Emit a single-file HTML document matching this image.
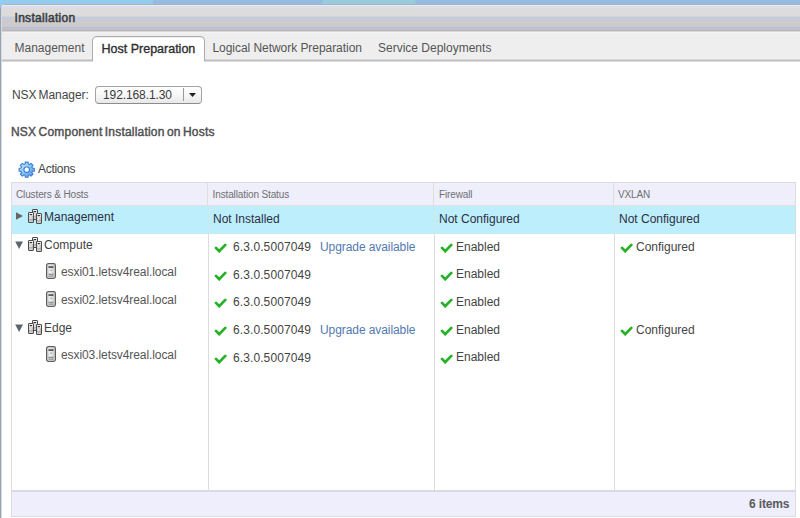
<!DOCTYPE html>
<html><head><meta charset="utf-8">
<style>
*{margin:0;padding:0;box-sizing:border-box}
html,body{width:800px;height:518px;overflow:hidden;background:#fff}
body{position:relative;font-family:"Liberation Sans",sans-serif;font-size:12px;color:#333}
.a{position:absolute}
.t{position:absolute;line-height:14px;white-space:nowrap}
#topband{left:0;top:0;width:800px;height:12px;background:#96bbe0}
#seg1{left:0;top:0;width:154px;height:12px;background:#94ccf0;clip-path:polygon(0 0,153.5px 0,150px 12px,0 12px)}
#seg2{left:318px;top:0;width:98px;height:12px;background:#98ccdc;clip-path:polygon(5px 0,97.5px 0,97.5px 12px,0 12px)}
#panel{left:0;top:4px;width:800px;height:514px;background:#fff;border-top-left-radius:5px;overflow:hidden;border-left:1px solid #97a3ae}
#hdr{left:-1px;top:0;width:801px;height:27px;background:linear-gradient(to bottom,#aab2b8 0px,#aab2b8 1px,#e2eef4 1px,#e2eef4 2px,#dcdcec 2px,#dcdcec 4px,#dcdcdc 4px,#dcdcdc 12px,#c8d8dc 12px,#c8d8dc 13px,#cacadc 13px,#cacadc 16px,#cccccc 16px,#cccccc 22px,#c0ccd0 22px,#c0ccd0 23px,#c0c0d2 23px,#c0c0d2 26px,#b8b8b8 26px,#b8b8b8 27px)}
#leftb{left:0;top:0;width:1px;height:514px;background:#d6dade}
#tabbar{left:-1px;top:27px;width:801px;height:31px;background:linear-gradient(to bottom,#d8d8d8 0px,#d8d8d8 1px,#f4f4f4 1px,#f4f4f4 2px,#eeeeee 2px,#eeeeee 27px,#f2f2f2 27px,#f2f2f2 28px,#d4d4d4 28px,#d4d4d4 29px,#c2c2c2 29px,#c2c2c2 30px,#dcdcdc 30px,#dcdcdc 31px)}
#acttab{left:91px;top:32px;width:113px;height:25px;background:#fff;border:1px solid #acacac;border-bottom:none;border-radius:5px 5px 0 0;box-shadow:inset 0 1px 0 #f0f0f0}
#acttab2{left:92px;top:57px;width:111px;height:2px;background:#fff}
.tab{color:#555}
#hp{color:#2e2e2e;font-size:12.5px;-webkit-text-stroke:0.35px #2e2e2e}
#dd{left:95px;top:85.6px;width:107px;height:18.8px;border:1px solid #a4a4a4;border-bottom-color:#8c8c8c;border-radius:4px;background:linear-gradient(to bottom,#fff 0,#fafafa 40%,#e8e8e8 100%)}
#ddsep{left:183px;top:88px;width:1px;height:13px;background:#9a9a9a}
#grid{left:11px;top:182px;width:785px;height:335px;border:1px solid #dcdcdc;background:#fff}
#ghdr{left:12px;top:183px;width:783px;height:23px;background:#efeefb;border-bottom:1px solid #e6dfe0}
.h{position:absolute;font-size:10px;line-height:14px;color:#707070;white-space:nowrap;letter-spacing:-0.13px}
.col{position:absolute;top:206px;width:1px;height:284px;background:#dcdcdc}
.hcol{position:absolute;top:183px;width:1px;height:22px;background:#dedede}
#sel{left:12px;top:206px;width:783px;height:27.5px;background:#bdeefb}
#foot{left:12px;top:490px;width:783px;height:26px;background:#eeeefc;border-top:2px solid #dadae0}
.r{position:absolute;line-height:27px;height:27px;white-space:nowrap;color:#333}
.up{color:#5279b0}
</style></head><body>
<svg width="0" height="0" style="position:absolute">
<defs>
 <linearGradient id="tw" x1="0" y1="0" x2="1" y2="0"><stop offset="0" stop-color="#c4c4c4"/><stop offset="0.4" stop-color="#e4e4e4"/><stop offset="1" stop-color="#b4b4b4"/></linearGradient>
 <g id="tower">
  <rect x="0.5" y="0.5" width="5" height="10" rx="0.4" fill="url(#tw)" stroke="#4c4c4c"/>
  <rect x="1" y="1" width="4" height="3" fill="#f4f4f4"/>
  <rect x="1.6" y="2" width="2.6" height="1.2" fill="#333"/>
  <rect x="1" y="7.4" width="4" height="1" fill="#9a9a9a"/>
  <rect x="1" y="8.4" width="4" height="1.2" fill="#c8c8c8"/>
 </g>
 <g id="cl">
  <use href="#tower" x="4" y="0"/>
  <use href="#tower" x="0" y="3"/>
  <use href="#tower" x="8" y="4"/>
 </g>
 <linearGradient id="sg" x1="0" y1="0" x2="1" y2="0"><stop offset="0" stop-color="#c8c8c8"/><stop offset="0.4" stop-color="#f2f2f2"/><stop offset="1" stop-color="#c0c0c0"/></linearGradient>
 <g id="sv">
  <rect x="0.6" y="0.6" width="8.8" height="14.8" rx="1.8" fill="url(#sg)" stroke="#5c5c5c" stroke-width="1.2"/>
  <rect x="2" y="2" width="6" height="12" fill="none" stroke="#d8d8d8" stroke-width="0.6"/>
  <rect x="2.5" y="3.2" width="5" height="1.8" fill="#5a5a5a"/>
  <rect x="4.3" y="6.5" width="1.4" height="1.4" fill="#999"/>
  <rect x="2.5" y="10.8" width="5" height="1" fill="#7a7a7a"/>
  <rect x="2.5" y="12.6" width="5" height="1" fill="#7a7a7a"/>
 </g>
 <path id="ck" d="M2 4.9L5.2 8.2L11.3 1.9" fill="none" stroke="#27b127" stroke-width="2.7" stroke-linecap="round"/>
</defs></svg>

<div class="a" id="topband"></div>
<div class="a" id="seg1"></div>
<div class="a" id="seg2"></div>
<div class="a" id="panel">
  <div class="a" id="hdr"></div>
  <div class="a" id="tabbar"></div>
  <div class="a" id="acttab"></div><div class="a" id="acttab2"></div>
  <div class="a" id="leftb"></div>
</div>
<div class="t" style="left:14.5px;top:11px;color:#3c3c3c;letter-spacing:0.3px;-webkit-text-stroke:0.5px #3c3c3c">Installation</div>
<div class="t tab" style="left:14.5px;top:41.4px">Management</div>
<div class="t" id="hp" style="left:101.5px;top:41.6px">Host Preparation</div>
<div class="t tab" style="left:212.5px;top:41.4px;letter-spacing:-0.05px">Logical Network Preparation</div>
<div class="t tab" style="left:378px;top:41.4px">Service Deployments</div>

<div class="t" style="left:12px;top:88px;color:#444;letter-spacing:-0.05px;word-spacing:-1.3px">NSX Manager:</div>
<div class="a" id="dd"></div>
<div class="a" id="ddsep"></div>
<div class="t" style="left:103px;top:88.4px;color:#3a3a3a;letter-spacing:-0.1px">192.168.1.30</div>
<svg class="a" style="left:189px;top:93px" width="8" height="5"><path d="M0 0H7L3.5 4Z" fill="#222"/></svg>

<div class="t" style="left:11px;top:125px;color:#505050;letter-spacing:0.2px;word-spacing:-1.2px;-webkit-text-stroke:0.45px #505050">NSX Component Installation on Hosts</div>

<svg class="a" style="left:18.4px;top:160.8px" width="17.4" height="17.4" viewBox="0 0 18 18"><defs><linearGradient id="gg" x1="0" y1="0" x2="1" y2="1"><stop offset="0" stop-color="#d0f0fd"/><stop offset="0.45" stop-color="#8ccaf4"/><stop offset="1" stop-color="#4a94e4"/></linearGradient></defs><path d="M7.34 3.13 L7.50 1.14 L10.50 1.14 L10.66 3.13 L11.98 3.68 L13.50 2.38 L15.62 4.50 L14.32 6.02 L14.87 7.34 L16.86 7.50 L16.86 10.50 L14.87 10.66 L14.32 11.98 L15.62 13.50 L13.50 15.62 L11.98 14.32 L10.66 14.87 L10.50 16.86 L7.50 16.86 L7.34 14.87 L6.02 14.32 L4.50 15.62 L2.38 13.50 L3.68 11.98 L3.13 10.66 L1.14 10.50 L1.14 7.50 L3.13 7.34 L3.68 6.02 L2.38 4.50 L4.50 2.38 L6.02 3.68Z" fill="url(#gg)" stroke="#3a7ad4" stroke-width="1.1" stroke-linejoin="round"/><circle cx="9" cy="9" r="2.8" fill="none" stroke="#3a78d0" stroke-width="1.2"/><circle cx="9" cy="9" r="2.2" fill="#fff"/></svg>
<div class="t" style="left:38px;top:161.5px;color:#444;letter-spacing:-0.3px">Actions</div>

<div class="a" id="grid"></div>
<div class="a" id="ghdr"></div>
<div class="a" id="sel"></div>
<div class="hcol" style="left:207px"></div><div class="col" style="left:208px"></div>
<div class="hcol" style="left:433px"></div><div class="col" style="left:434px"></div>
<div class="hcol" style="left:613px"></div><div class="col" style="left:614px"></div>
<div class="a" id="foot"></div><div class="a" style="left:208px;top:206px;width:1px;height:27.5px;background:#d4e4ea"></div><div class="a" style="left:434px;top:206px;width:1px;height:27.5px;background:#d4e4ea"></div><div class="a" style="left:614px;top:206px;width:1px;height:27.5px;background:#d4e4ea"></div>
<div class="h" style="left:16px;top:187.7px">Clusters &amp; Hosts</div>
<div class="h" style="left:212.6px;top:187.7px">Installation Status</div>
<div class="h" style="left:439px;top:187.7px">Firewall</div>
<div class="h" style="left:618px;top:187.7px">VXLAN</div>

<!--ROWS-->
<svg class="a" style="left:15px;top:212.0px" width="9" height="9"><path d="M1 0.3L8 4L1 7.7Z" fill="#666"/></svg>
<svg class="a" style="left:28px;top:209.0px" width="15" height="16"><use href="#cl"/></svg>
<div class="r" style="left:44px;top:203.5px;color:#2e2e44">Management</div>
<div class="r" style="left:213px;top:206.0px;color:#2e2e44">Not Installed</div>
<div class="r" style="left:439px;top:206.0px;color:#2e2e44">Not Configured</div>
<div class="r" style="left:619px;top:206.0px;color:#2e2e44">Not Configured</div>
<svg class="a" style="left:15px;top:240.5px" width="9" height="9"><path d="M0.2 0.5H8L4.1 8Z" fill="#5a6670"/></svg>
<svg class="a" style="left:28px;top:237.0px" width="15" height="16"><use href="#cl"/></svg>
<div class="r" style="left:44px;top:231.5px;color:#444">Compute</div>
<svg class="a" style="left:214px;top:243.0px" width="13" height="10"><use href="#ck"/></svg>
<div class="r" style="left:233px;top:234.0px;color:#444;letter-spacing:0.1px">6.3.0.5007049</div>
<div class="r up" style="left:320px;top:234.0px;letter-spacing:-0.08px">Upgrade available</div>
<svg class="a" style="left:440px;top:243.0px" width="13" height="10"><use href="#ck"/></svg>
<div class="r" style="left:456px;top:233.5px;color:#444">Enabled</div>
<svg class="a" style="left:620px;top:243.0px" width="13" height="10"><use href="#ck"/></svg>
<div class="r" style="left:636px;top:233.5px;color:#444">Configured</div>
<svg class="a" style="left:46px;top:263.0px" width="11" height="17"><use href="#sv"/></svg>
<div class="r" style="left:61px;top:259.0px;color:#555;letter-spacing:-0.08px">esxi01.letsv4real.local</div>
<svg class="a" style="left:214px;top:270.5px" width="13" height="10"><use href="#ck"/></svg>
<div class="r" style="left:233px;top:261.5px;color:#444;letter-spacing:0.1px">6.3.0.5007049</div>
<svg class="a" style="left:440px;top:270.5px" width="13" height="10"><use href="#ck"/></svg>
<div class="r" style="left:456px;top:261.0px;color:#444">Enabled</div>
<svg class="a" style="left:46px;top:290.8px" width="11" height="17"><use href="#sv"/></svg>
<div class="r" style="left:61px;top:286.8px;color:#555;letter-spacing:-0.08px">esxi02.letsv4real.local</div>
<svg class="a" style="left:214px;top:298.3px" width="13" height="10"><use href="#ck"/></svg>
<div class="r" style="left:233px;top:289.3px;color:#444;letter-spacing:0.1px">6.3.0.5007049</div>
<svg class="a" style="left:440px;top:298.3px" width="13" height="10"><use href="#ck"/></svg>
<div class="r" style="left:456px;top:288.8px;color:#444">Enabled</div>
<svg class="a" style="left:15px;top:323.7px" width="9" height="9"><path d="M0.2 0.5H8L4.1 8Z" fill="#5a6670"/></svg>
<svg class="a" style="left:28px;top:320.2px" width="15" height="16"><use href="#cl"/></svg>
<div class="r" style="left:44px;top:314.7px;color:#444">Edge</div>
<svg class="a" style="left:214px;top:326.2px" width="13" height="10"><use href="#ck"/></svg>
<div class="r" style="left:233px;top:317.2px;color:#444;letter-spacing:0.1px">6.3.0.5007049</div>
<div class="r up" style="left:320px;top:317.2px;letter-spacing:-0.08px">Upgrade available</div>
<svg class="a" style="left:440px;top:326.2px" width="13" height="10"><use href="#ck"/></svg>
<div class="r" style="left:456px;top:316.7px;color:#444">Enabled</div>
<svg class="a" style="left:620px;top:326.2px" width="13" height="10"><use href="#ck"/></svg>
<div class="r" style="left:636px;top:316.7px;color:#444">Configured</div>
<svg class="a" style="left:46px;top:346.2px" width="11" height="17"><use href="#sv"/></svg>
<div class="r" style="left:61px;top:342.2px;color:#555;letter-spacing:-0.08px">esxi03.letsv4real.local</div>
<svg class="a" style="left:214px;top:353.7px" width="13" height="10"><use href="#ck"/></svg>
<div class="r" style="left:233px;top:344.7px;color:#444;letter-spacing:0.1px">6.3.0.5007049</div>
<svg class="a" style="left:440px;top:353.7px" width="13" height="10"><use href="#ck"/></svg>
<div class="r" style="left:456px;top:344.2px;color:#444">Enabled</div>
<!--/ROWS-->
<div class="t" style="left:749px;top:497px;color:#5a5a5a;font-weight:bold;letter-spacing:-0.15px">6 items</div>
</body></html>
